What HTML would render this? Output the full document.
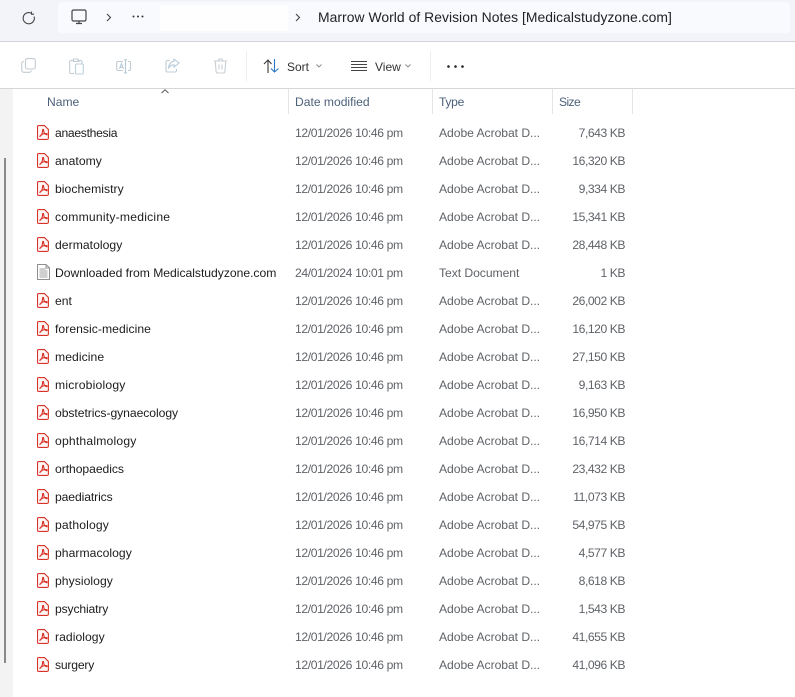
<!DOCTYPE html>
<html><head><meta charset="utf-8"><style>
html,body{margin:0;padding:0}
body{width:795px;height:697px;position:relative;overflow:hidden;background:#fff;font-family:"Liberation Sans",sans-serif;color:#1a1a1a}
.a{position:absolute;white-space:nowrap}
svg{position:absolute;overflow:visible}
.r{position:absolute;left:0;width:795px;height:28px;line-height:28px;font-size:12.15px}
.r span{position:absolute;white-space:nowrap;top:1px}
.n{left:55px;color:#1c1c1c}
.d{left:295px;color:#5f6368;letter-spacing:-.37px}
.t{left:439px;color:#5f6368;letter-spacing:-.05px}
.s{right:170px;color:#5f6368;letter-spacing:-.45px}
.r svg{left:37px;top:7px}
.h{font-size:12.1px;color:#4c607a;top:95px}
.v{position:absolute;top:89px;height:25px;width:1px;background:#e3e5e8}
</style></head><body>
<svg width="0" height="0" style="left:0;top:0"><defs>
<symbol id="pdf" viewBox="0 0 12 15"><path d="M1.500.600h6l3.900 3.900v8.700a1.200 1.200 0 0 1-1.200 1.200H1.500a1 1 0 0 1-1-1V1.600a1 1 0 0 1 1-1z" fill="#fff7f6" stroke="#d7332b" stroke-width="1.100"/><path d="M2.600 11.600c1.800-1 2.900-3.700 3-6.300 0-1.300.9-1.300 1 0 .1 2.300 1.300 4 3 4.400.8.100.7-1-.1-1.100-2.300-.3-5.200.5-6.900 3z" fill="none" stroke="#d7332b" stroke-width="1.100"/></symbol>
<symbol id="txt" viewBox="0 0 13 16"><path d="M.500.500h8.500l3.500 3.500v11.500H.500zM9 .500V4h3.500" fill="#fff" stroke="#8f8f8f"/><path d="M2.500 5h6M2.500 7h8M2.500 9h8M2.500 11h8M2.500 13h8" fill="none" stroke="#a0a0a0"/></symbol>
</defs></svg>
<div class="a" style="left:0;top:0;width:795px;height:41px;background:#f3f4fa"></div>
<div class="a" style="left:58px;top:2px;width:732px;height:31px;background:#f9fafe;border-radius:4px"></div>
<div class="a" style="left:160px;top:5px;width:128px;height:26px;background:#fefeff"></div>
<div class="a" style="left:0;top:41px;width:795px;height:1px;background:#d2d3d8"></div>
<div class="a" style="left:0;top:88px;width:795px;height:1px;background:#d6d6d8"></div>
<div class="a" style="left:0;top:89px;width:13px;height:608px;background:#f3f3f3"></div>
<div class="a" style="left:4px;top:158px;width:2px;height:505px;background:#8a8a8a"></div>

<svg style="left:21px;top:10px" width="15" height="15" viewBox="0 0 15 15" fill="none" stroke="#444" stroke-width="1.1"><path d="M12.600 5.500A5.600 5.600 0 1 1 10 2.300M10 .600v2.600h2.600" transform="translate(.5 1)"/></svg>
<svg style="left:71px;top:9px" width="16" height="16" viewBox="0 0 16 16" fill="none" stroke="#444" stroke-width="1.2"><rect x="1" y="1" width="14" height="11" rx="1.500"/><path d="M5 14.500h6M8 12v2.500"/></svg>
<svg style="left:106px;top:13px" width="6" height="9" viewBox="0 0 6 9" fill="none" stroke="#444" stroke-width="1.1"><path d="M1 1l3.500 3.500L1 8"/></svg>
<svg style="left:132px;top:15px" width="12" height="3" viewBox="0 0 12 3" fill="#333"><circle cx="1.500" cy="1.500" r="1"/><circle cx="6" cy="1.500" r="1"/><circle cx="10.500" cy="1.500" r="1"/></svg>
<svg style="left:295px;top:13px" width="6" height="9" viewBox="0 0 6 9" fill="none" stroke="#444" stroke-width="1.1"><path d="M1 1l3.500 3.500L1 8"/></svg>
<div class="a" style="left:318px;top:9px;font-size:13.9px;line-height:17px;color:#222;letter-spacing:.04px">Marrow World of Revision Notes [Medicalstudyzone.com]</div>

<svg style="left:21px;top:58px" width="15" height="15" viewBox="0 0 15 15" fill="none" stroke="#c2ccd3" stroke-width="1.100"><rect x="4.500" y=".600" width="9.800" height="10.400" rx="2"/><path d="M3 3.500H2.500A1.800 1.800 0 0 0 .700 5.300V12a2.300 2.300 0 0 0 2.300 2.300h5.500a1.800 1.800 0 0 0 1.800-1.800"/></svg>
<svg style="left:69px;top:58px" width="15" height="17" viewBox="0 0 15 17" fill="none" stroke="#c2ccd3" stroke-width="1.100"><path d="M5 2.500H2a1.300 1.300 0 0 0-1.300 1.300v10.400A1.300 1.300 0 0 0 2 15.500h3M10 2.500H9V1H4.500v2.500H10z"/><rect x="6.500" y="6" width="7.800" height="10" rx="1" stroke="#bcd0dc"/><path d="M13 5.500V4a1.300 1.300 0 0 0-1.300-1.500H10"/></svg>
<svg style="left:116px;top:59px" width="16" height="15" viewBox="0 0 16 15" fill="none" stroke="#c2ccd3" stroke-width="1.100"><path d="M7 2.500H2a1.300 1.300 0 0 0-1.300 1.300v6.400A1.300 1.300 0 0 0 2 11.500h5M12 2.500h1.500a1 1 0 0 1 1 1v7a1 1 0 0 1-1 1H12"/><path d="M9.500 .800v13M8 .800h3M8 13.800h3M3.500 9.800L5.500 4.500l2 5.300M4.200 8.300h2.600" stroke="#b6cbd9"/></svg>
<svg style="left:165px;top:58px" width="15" height="15" viewBox="0 0 15 15" fill="none" stroke="#c2ccd3" stroke-width="1.100"><path d="M5 2.500H2.500A1.500 1.500 0 0 0 1 4v8.500A1.500 1.500 0 0 0 2.500 14H10a1.500 1.500 0 0 0 1.500-1.500V11"/><path d="M9 1l5 4-5 4V6.800C6.500 6.800 4.500 8 3.500 10.500 3.500 7 5.500 3.800 9 3.300z" stroke="#b6cbd9"/></svg>
<svg style="left:213px;top:58px" width="15" height="16" viewBox="0 0 15 16" fill="none" stroke="#c8ced2" stroke-width="1.100"><path d="M.800 3h13.400M5 3l1-2h3l1 2M2.200 3l.9 10.500a1.500 1.500 0 0 0 1.500 1.500h5.800a1.500 1.500 0 0 0 1.500-1.500L12.800 3M6 6.500v5M9 6.500v5"/></svg>
<div class="a" style="left:246px;top:51px;width:1px;height:30px;background:#eeeeee"></div>
<svg style="left:263px;top:59px" width="17" height="14" viewBox="0 0 17 14" fill="none" stroke-width="1.100"><path d="M5 14V1M1 5l4-4 3.500 4" stroke="#3a3a3a"/><path d="M11.500 0v13M8 9.500l3.500 3.500 4-3.500" stroke="#2b78c6"/></svg>
<div class="a" style="left:287px;top:60px;font-size:12px;line-height:14px;color:#333">Sort</div>
<svg style="left:316px;top:64px" width="6" height="4" viewBox="0 0 6 4" fill="none" stroke="#888" stroke-width=".9"><path d="M.500.500l2.500 2.500L5.500.500"/></svg>
<svg style="left:351px;top:60px" width="16" height="12" viewBox="0 0 16 12" fill="none" stroke="#444" stroke-width="1"><path d="M0 1.500h16M0 4.500h16M0 7.500h16M0 10.500h16"/></svg>
<div class="a" style="left:375px;top:60px;font-size:12px;line-height:14px;color:#333">View</div>
<svg style="left:405px;top:64px" width="6" height="4" viewBox="0 0 6 4" fill="none" stroke="#888" stroke-width=".9"><path d="M.500.500l2.500 2.500L5.500.500"/></svg>
<div class="a" style="left:430px;top:51px;width:1px;height:30px;background:#eeeeee"></div>
<svg style="left:447px;top:65px" width="17" height="3" viewBox="0 0 17 3" fill="#222"><circle cx="1.500" cy="1.500" r="1.300"/><circle cx="8.500" cy="1.500" r="1.300"/><circle cx="15.500" cy="1.500" r="1.300"/></svg>

<svg style="left:161px;top:89px" width="8" height="5" viewBox="0 0 8 5" fill="none" stroke="#555" stroke-width="1"><path d="M.500 4L4 .800 7.500 4"/></svg>
<div class="a h" style="left:47px">Name</div>
<div class="a h" style="left:295px">Date modified</div>
<div class="a h" style="left:439px;letter-spacing:-.3px">Type</div>
<div class="a h" style="left:559px;letter-spacing:-.6px">Size</div>
<div class="v" style="left:288px"></div><div class="v" style="left:432px"></div><div class="v" style="left:552px"></div><div class="v" style="left:632px"></div>

<div class="r" style="top:118px"><svg width="12" height="15"><use href="#pdf"/></svg><span class="n" style="letter-spacing:-.3px">anaesthesia</span><span class="d">12/01/2026 10:46 pm</span><span class="t">Adobe Acrobat D...</span><span class="s">7,643 KB</span></div>
<div class="r" style="top:146px"><svg width="12" height="15"><use href="#pdf"/></svg><span class="n" style="letter-spacing:.05px">anatomy</span><span class="d">12/01/2026 10:46 pm</span><span class="t">Adobe Acrobat D...</span><span class="s">16,320 KB</span></div>
<div class="r" style="top:174px"><svg width="12" height="15"><use href="#pdf"/></svg><span class="n" style="letter-spacing:.05px">biochemistry</span><span class="d">12/01/2026 10:46 pm</span><span class="t">Adobe Acrobat D...</span><span class="s">9,334 KB</span></div>
<div class="r" style="top:202px"><svg width="12" height="15"><use href="#pdf"/></svg><span class="n" style="letter-spacing:.22px">community-medicine</span><span class="d">12/01/2026 10:46 pm</span><span class="t">Adobe Acrobat D...</span><span class="s">15,341 KB</span></div>
<div class="r" style="top:230px"><svg width="12" height="15"><use href="#pdf"/></svg><span class="n" style="letter-spacing:.05px">dermatology</span><span class="d">12/01/2026 10:46 pm</span><span class="t">Adobe Acrobat D...</span><span class="s">28,448 KB</span></div>
<div class="r" style="top:258px"><svg width="13" height="16" style="top:6px"><use href="#txt"/></svg><span class="n" style="letter-spacing:-.02px">Downloaded from Medicalstudyzone.com</span><span class="d">24/01/2024 10:01 pm</span><span class="t">Text Document</span><span class="s">1 KB</span></div>
<div class="r" style="top:286px"><svg width="12" height="15"><use href="#pdf"/></svg><span class="n">ent</span><span class="d">12/01/2026 10:46 pm</span><span class="t">Adobe Acrobat D...</span><span class="s">26,002 KB</span></div>
<div class="r" style="top:314px"><svg width="12" height="15"><use href="#pdf"/></svg><span class="n" style="letter-spacing:.05px">forensic-medicine</span><span class="d">12/01/2026 10:46 pm</span><span class="t">Adobe Acrobat D...</span><span class="s">16,120 KB</span></div>
<div class="r" style="top:342px"><svg width="12" height="15"><use href="#pdf"/></svg><span class="n" style="letter-spacing:.08px">medicine</span><span class="d">12/01/2026 10:46 pm</span><span class="t">Adobe Acrobat D...</span><span class="s">27,150 KB</span></div>
<div class="r" style="top:370px"><svg width="12" height="15"><use href="#pdf"/></svg><span class="n" style="letter-spacing:.2px">microbiology</span><span class="d">12/01/2026 10:46 pm</span><span class="t">Adobe Acrobat D...</span><span class="s">9,163 KB</span></div>
<div class="r" style="top:398px"><svg width="12" height="15"><use href="#pdf"/></svg><span class="n" style="letter-spacing:-.05px">obstetrics-gynaecology</span><span class="d">12/01/2026 10:46 pm</span><span class="t">Adobe Acrobat D...</span><span class="s">16,950 KB</span></div>
<div class="r" style="top:426px"><svg width="12" height="15"><use href="#pdf"/></svg><span class="n" style="letter-spacing:.2px">ophthalmology</span><span class="d">12/01/2026 10:46 pm</span><span class="t">Adobe Acrobat D...</span><span class="s">16,714 KB</span></div>
<div class="r" style="top:454px"><svg width="12" height="15"><use href="#pdf"/></svg><span class="n" style="letter-spacing:-.05px">orthopaedics</span><span class="d">12/01/2026 10:46 pm</span><span class="t">Adobe Acrobat D...</span><span class="s">23,432 KB</span></div>
<div class="r" style="top:482px"><svg width="12" height="15"><use href="#pdf"/></svg><span class="n" style="letter-spacing:-.1px">paediatrics</span><span class="d">12/01/2026 10:46 pm</span><span class="t">Adobe Acrobat D...</span><span class="s">11,073 KB</span></div>
<div class="r" style="top:510px"><svg width="12" height="15"><use href="#pdf"/></svg><span class="n" style="letter-spacing:.15px">pathology</span><span class="d">12/01/2026 10:46 pm</span><span class="t">Adobe Acrobat D...</span><span class="s">54,975 KB</span></div>
<div class="r" style="top:538px"><svg width="12" height="15"><use href="#pdf"/></svg><span class="n" style="letter-spacing:.05px">pharmacology</span><span class="d">12/01/2026 10:46 pm</span><span class="t">Adobe Acrobat D...</span><span class="s">4,577 KB</span></div>
<div class="r" style="top:566px"><svg width="12" height="15"><use href="#pdf"/></svg><span class="n" style="letter-spacing:.05px">physiology</span><span class="d">12/01/2026 10:46 pm</span><span class="t">Adobe Acrobat D...</span><span class="s">8,618 KB</span></div>
<div class="r" style="top:594px"><svg width="12" height="15"><use href="#pdf"/></svg><span class="n" style="letter-spacing:-.15px">psychiatry</span><span class="d">12/01/2026 10:46 pm</span><span class="t">Adobe Acrobat D...</span><span class="s">1,543 KB</span></div>
<div class="r" style="top:622px"><svg width="12" height="15"><use href="#pdf"/></svg><span class="n" style="letter-spacing:.05px">radiology</span><span class="d">12/01/2026 10:46 pm</span><span class="t">Adobe Acrobat D...</span><span class="s">41,655 KB</span></div>
<div class="r" style="top:650px"><svg width="12" height="15"><use href="#pdf"/></svg><span class="n" style="letter-spacing:-.2px">surgery</span><span class="d">12/01/2026 10:46 pm</span><span class="t">Adobe Acrobat D...</span><span class="s">41,096 KB</span></div>
</body></html>
